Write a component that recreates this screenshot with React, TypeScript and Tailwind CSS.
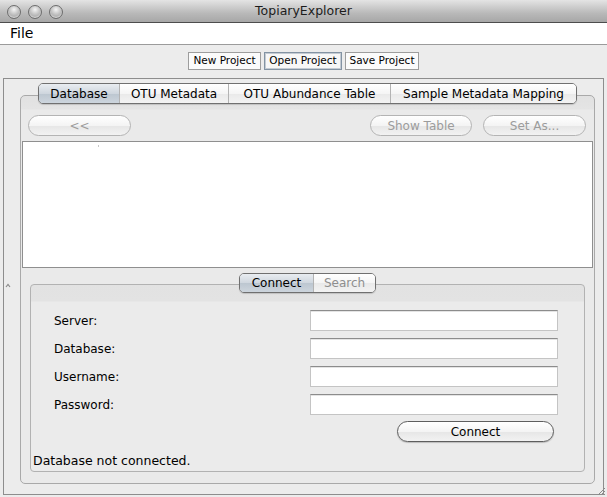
import React from "react";

const outerTabs = [
  { label: "Database", w: "w-[80px]", active: true },
  { label: "OTU Metadata", w: "w-[109px]", active: false },
  { label: "OTU Abundance Table", w: "w-[162px]", active: false },
  { label: "Sample Metadata Mapping", w: "w-[186px]", active: false },
];

const fields = ["Server:", "Database:", "Username:", "Password:"];

function Light() {
  return (
    <div className="w-[14px] h-[14px] rounded-full border border-[#6d6d6d] bg-[radial-gradient(circle_at_50%_30%,#f4f4f4_0%,#c4c4c4_45%,#8e8e8e_100%)] shadow-[inset_0_-1px_1px_rgba(255,255,255,0.6)]" />
  );
}

function Pill({ label, w, disabled }: { label: string; w: string; disabled?: boolean }) {
  return (
    <div
      className={`${w} h-[21px] rounded-full border flex items-center justify-center text-[12px] leading-none bg-[linear-gradient(to_bottom,#ffffff_0%,#f4f4f4_50%,#e6e6e6_51%,#f2f2f2_100%)] ${
        disabled
          ? "border-[#b4b4b4] text-[#9c9c9c]"
          : "border-[#5e5e5e] text-black shadow-[0_1px_1px_rgba(0,0,0,0.2)]"
      }`}
    >
      {label}
    </div>
  );
}

export default function App() {
  return (
    <div className="w-[607px] h-[497px] bg-[#ececec] flex flex-col relative overflow-hidden text-black font-['DejaVu_Sans',sans-serif]">
      {/* title bar */}
      <div className="h-[23px] grid grid-cols-[1fr_auto_1fr] items-center border-b border-[#4d4d4d] bg-[linear-gradient(to_bottom,#e4e4e4,#b9b9b9_60%,#a7a7a7)]">
        <div className="flex gap-[7px] pl-[7px] pt-[1px]">
          <Light />
          <Light />
          <Light />
        </div>
        <div className="text-[12.5px] text-[#1c1c1c] pt-[1px]">TopiaryExplorer</div>
        <div />
      </div>

      {/* menu bar */}
      <div className="h-[22px] bg-white border-b border-[#9b9b9b] flex items-center px-[10px] text-[14px]">
        File
      </div>

      {/* toolbar */}
      <div className="h-[33px] flex justify-center gap-[3px] pt-[7px]">
        <div className="w-[73px] h-[18px] border border-[#9d9d9d] bg-[#fbfbfb] text-[10.5px] flex items-center justify-center">New Project</div>
        <div className="w-[78px] h-[18px] border border-[#8393a3] bg-[#f7f7f7] text-[10.5px] flex items-center justify-center shadow-[inset_0_0_0_1px_#c4cbd3]">Open Project</div>
        <div className="w-[74px] h-[18px] border border-[#9d9d9d] bg-[#fbfbfb] text-[10.5px] flex items-center justify-center">Save Project</div>
      </div>

      {/* main panel */}
      <div className="flex-1 mx-[3px] mb-[2px] border border-[#8d8d8d] flex flex-col pt-[4px] pb-[10px] pl-[16px] pr-[8px] relative">
        <svg className="absolute left-[1px] top-[204px]" width="6" height="5" viewBox="0 0 6 5">
          <path d="M1 4 L3 1.5 L5 4" stroke="#8a8a8a" strokeWidth="1.2" fill="none" />
        </svg>

        {/* outer tabs */}
        <div className="relative z-10 flex justify-center">
          <div className="flex h-[21px] rounded-[5px] border border-[#707070] overflow-hidden shadow-[0_1px_1px_rgba(0,0,0,0.15)]">
            {outerTabs.map((t, i) => (
              <div
                key={t.label}
                className={`${t.w} flex items-center justify-center text-[12px] leading-none ${i > 0 ? "border-l border-[#b3b3b3]" : ""} ${
                  t.active
                    ? "bg-[linear-gradient(to_bottom,#e9edf1,#cfd6de_50%,#bcc6d0_51%,#cdd5dd)]"
                    : "bg-[linear-gradient(to_bottom,#ffffff,#f5f5f5_50%,#e9e9e9_51%,#f3f3f3)]"
                }`}
              >
                {t.label}
              </div>
            ))}
          </div>
        </div>

        {/* outer tab box */}
        <div className="flex-1 -mt-[9px] border border-[#a9a9a9] rounded-[5px] flex flex-col bg-[linear-gradient(to_bottom,#e1e1e1_0px,#e4e4e4_13px,#eaeaea_14px,#eaeaea_100%)]">
          <div className="flex items-center pt-[19px] pl-[7px] pr-[8px]">
            <Pill label="<<" w="w-[103px]" disabled />
            <div className="ml-auto flex gap-[11px]">
              <Pill label="Show Table" w="w-[102px]" disabled />
              <Pill label="Set As..." w="w-[103px]" disabled />
            </div>
          </div>

          <div className="mt-[5px] mx-[1px] h-[127px] bg-white border border-[#8f8f8f] relative">
            <div className="absolute left-[75px] top-[3px] w-[1px] h-[2px] bg-[#c8c8c8]" />
          </div>

          {/* inner tabs */}
          <div className="relative z-10 mt-[5px] flex justify-center">
            <div className="flex h-[20px] rounded-[5px] border border-[#707070] overflow-hidden shadow-[0_1px_1px_rgba(0,0,0,0.15)]">
              <div className="w-[73px] flex items-center justify-center text-[12px] leading-none bg-[linear-gradient(to_bottom,#e9edf1,#cfd6de_50%,#bcc6d0_51%,#cdd5dd)]">
                Connect
              </div>
              <div className="w-[62px] flex items-center justify-center text-[12px] leading-none text-[#8e8e8e] border-l border-[#b3b3b3] bg-[linear-gradient(to_bottom,#ffffff,#f5f5f5_50%,#e9e9e9_51%,#f3f3f3)]">
                Search
              </div>
            </div>
          </div>

          {/* inner tab box */}
          <div className="-mt-[9px] mx-[9px] h-[188px] border border-[#b2b2b2] rounded-[4px] flex flex-col bg-[linear-gradient(to_bottom,#e2e2e2_0px,#e3e3e3_16px,#ebebeb_17px,#ebebeb_100%)]">
            <div className="flex flex-col gap-[7px] pt-[25px] pl-[23px] pr-[26px]">
              {fields.map((f) => (
                <div key={f} className="flex items-center h-[21px]">
                  <span className="text-[12px]">{f}</span>
                  <div className="ml-auto w-[248px] h-[21px] bg-white border border-[#c4c4c4] border-t-[#8c8c8c] shadow-[inset_0_1px_0_#e4e4e4]" />
                </div>
              ))}
            </div>
            <div className="flex justify-end pr-[30px] mt-[6px]">
              <Pill label="Connect" w="w-[157px]" />
            </div>
            <div className="mt-[11px] pl-[2px] text-[12.5px] leading-[15px]">Database not connected.</div>
          </div>
        </div>
      </div>

      {/* resize grip */}
      <svg className="absolute right-[1px] bottom-[1px]" width="10" height="10" viewBox="0 0 10 10">
        <path d="M9 2 L2 9 M9 5 L5 9 M9 8 L8 9" stroke="#8a8a8a" strokeWidth="1" />
      </svg>
    </div>
  );
}
